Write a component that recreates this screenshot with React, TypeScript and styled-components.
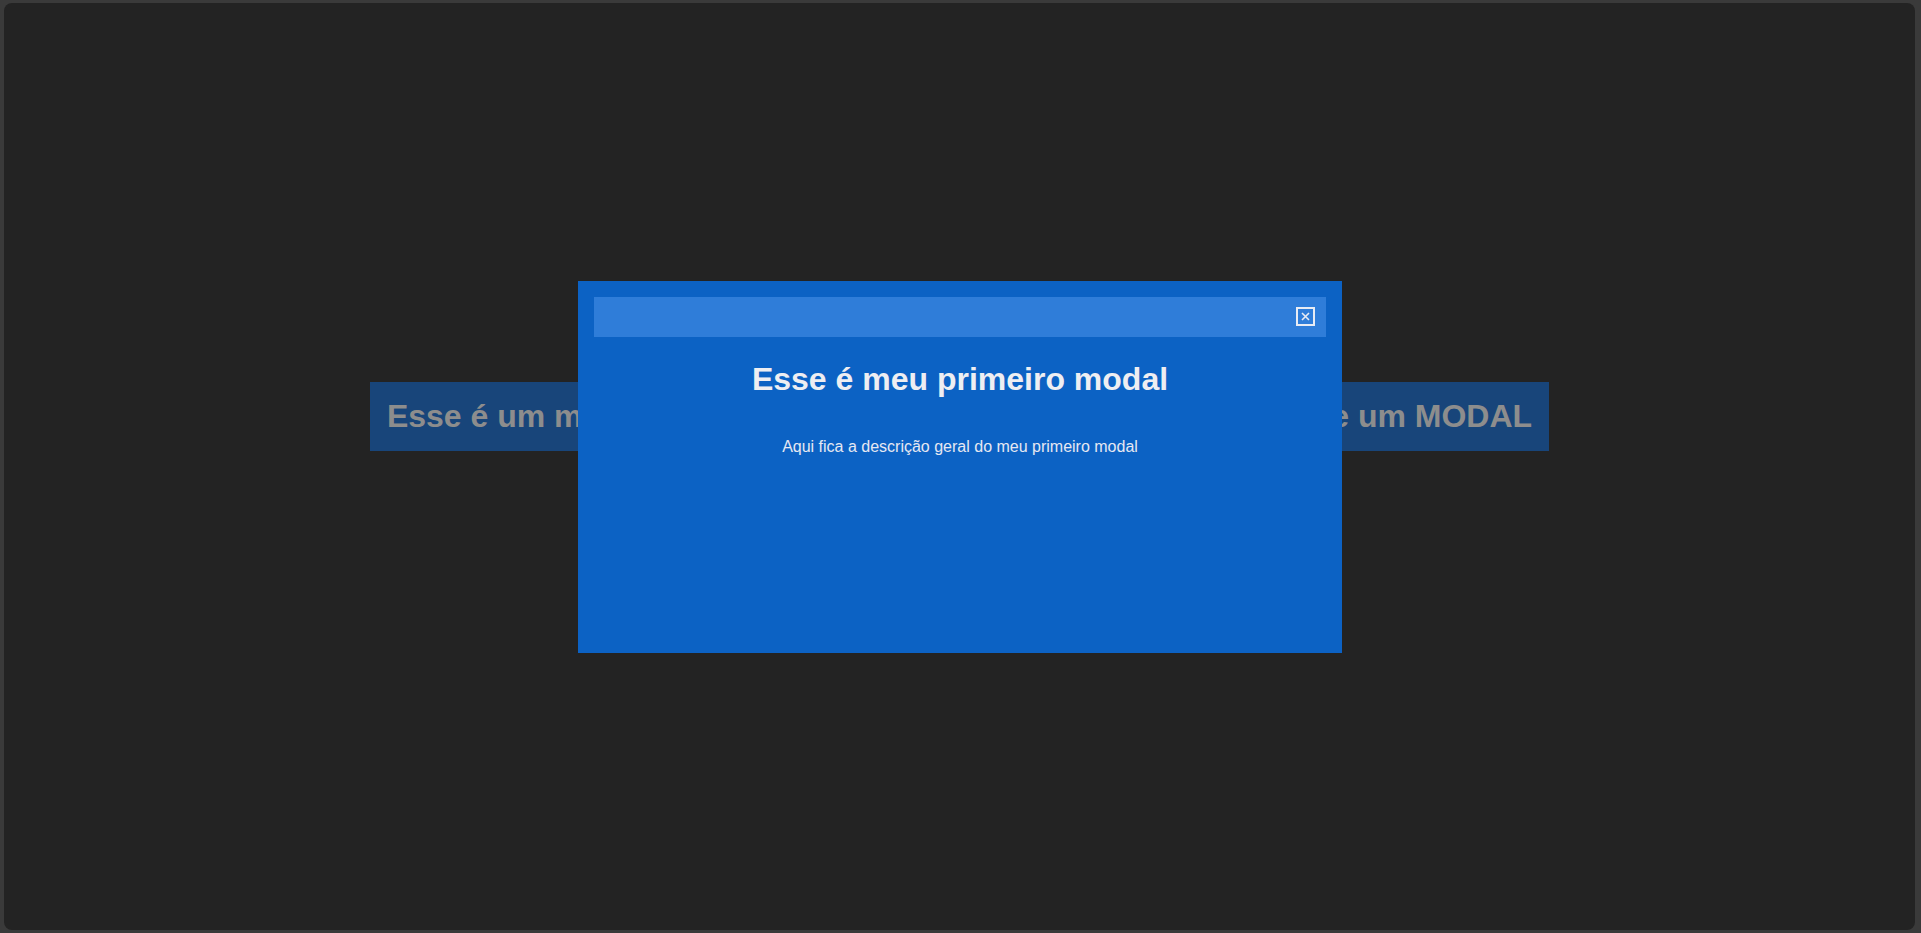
import { FunctionComponentElement, ReactElement } from 'react';
import styled, { createGlobalStyle } from 'styled-components';

const GlobalStyle = createGlobalStyle`
  html, body {
    margin: 0;
    padding: 0;
    height: 100%;
    background: #3a3a3a;
    font-family: 'Liberation Sans', Arial, sans-serif;
  }
  #root {
    height: 100%;
  }
`;

const Frame = styled.div`
  box-sizing: border-box;
  height: 100%;
  padding: 3px 6px 3px 4px;
`;

const Page = styled.main`
  height: 100%;
  background: #232323;
  border-radius: 8px;
  display: flex;
  align-items: center;
  justify-content: center;
  padding-bottom: 100px;
  box-sizing: border-box;
`;

const OpenButton = styled.button`
  border: none;
  margin: 0;
  padding: 16px 17px;
  background: #18457a;
  color: #8d8d8d;
  font-family: 'Liberation Sans', Arial, sans-serif;
  font-size: 32px;
  font-weight: 700;
  line-height: normal;
  white-space: nowrap;
  cursor: pointer;
`;

const Overlay = styled.div`
  position: fixed;
  inset: 0 1px 0 0;
  display: flex;
  align-items: center;
  justify-content: center;
`;

const ModalBox = styled.section`
  box-sizing: border-box;
  width: 764px;
  height: 372px;
  padding: 16px;
  background: #0c62c4;
  display: flex;
  flex-direction: column;
  align-items: stretch;
`;

const ModalHeader = styled.header`
  height: 40px;
  background: #2f7dd9;
  display: flex;
  align-items: center;
  justify-content: flex-end;
  padding-right: 11px;
`;

const CloseButton = styled.button`
  width: 19px;
  height: 19px;
  padding: 0;
  margin: 0;
  border: none;
  background: transparent;
  display: flex;
  cursor: pointer;
`;

const Title = styled.h1`
  margin: 24px 0 0;
  text-align: center;
  color: #eeeef2;
  font-size: 32px;
  font-weight: 700;
  line-height: normal;
`;

const Description = styled.p`
  margin: 40px 0 0;
  text-align: center;
  color: #e6e8f2;
  font-size: 16px;
  line-height: normal;
`;

const CloseIcon = () => (
  <svg width='19' height='19' viewBox='0 0 19 19'>
    <rect x='1' y='1' width='17' height='17' fill='none' stroke='#e8ecf4' strokeWidth='2' />
    <path d='M6 6 L13 13 M13 6 L6 13' stroke='#e8ecf4' strokeWidth='1.6' />
  </svg>
);

const App = (): FunctionComponentElement<ReactElement> => {
  return (
    <>
      <GlobalStyle />
      <Frame>
        <Page>
          <OpenButton>
            Esse é um modal, clique aqui para ver o que acontece, então; e um MODAL
          </OpenButton>
        </Page>
      </Frame>
      <Overlay>
        <ModalBox>
          <ModalHeader>
            <CloseButton aria-label='fechar'>
              <CloseIcon />
            </CloseButton>
          </ModalHeader>
          <Title>Esse é meu primeiro modal</Title>
          <Description>Aqui fica a descrição geral do meu primeiro modal</Description>
        </ModalBox>
      </Overlay>
    </>
  );
};

export default App;
